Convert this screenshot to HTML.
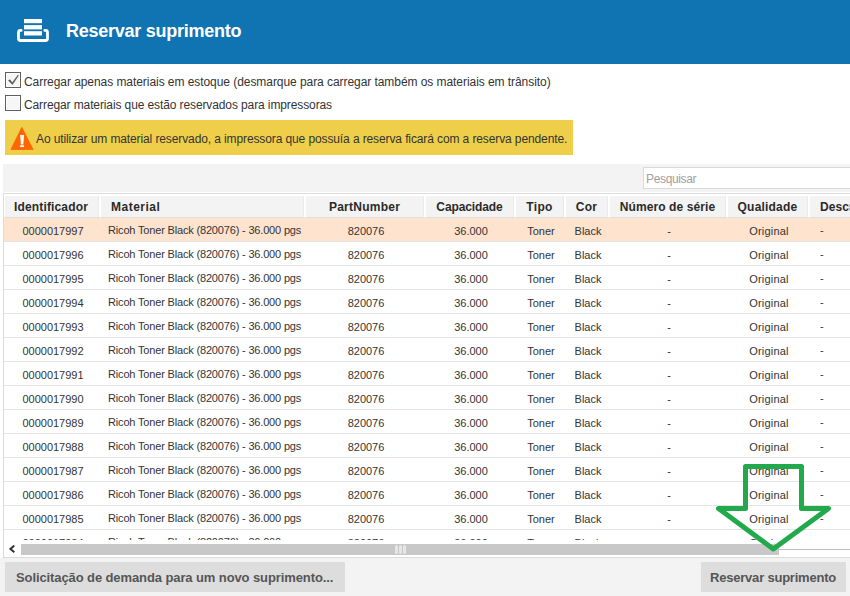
<!DOCTYPE html>
<html><head><meta charset="utf-8">
<style>
*{box-sizing:border-box;margin:0;padding:0}
html,body{width:850px;height:596px;overflow:hidden;background:#fff;font-family:"Liberation Sans",sans-serif;position:relative}
.abs{position:absolute}
.hdr{left:0;top:0;width:850px;height:64px;background:#0f74b1}
.title{left:66px;top:20px;font-size:18px;font-weight:bold;color:#fff;letter-spacing:-0.25px;white-space:nowrap;line-height:22px}
.cb{width:16px;height:16px;border:1px solid #5f5f5f;background:#fff}
.cb i{position:absolute;left:1px;top:1px;right:1px;bottom:1px;background:#f6f6f6}
.lbl{font-size:12px;color:#333;white-space:nowrap;line-height:14px}
.banner{left:5px;top:120px;width:568px;height:35px;background:#efcf49}
.btext{left:36px;top:132px;font-size:12px;color:#333;white-space:nowrap;letter-spacing:-0.11px;line-height:14px}
.panel{left:3px;top:164px;width:847px;height:28px;background:#f3f3f3}
.search{left:643px;top:167px;width:220px;height:22px;background:#fff;border:1px solid #d9d9d9}
.ph{left:646px;top:172px;font-size:12px;color:#a0a0a0;white-space:nowrap;line-height:14px;letter-spacing:-0.35px}
.grid{left:3px;top:193px;width:860px;height:365px;border:1px solid #dcdcdc;border-right:none;background:#fff;overflow:hidden}
.th{position:absolute;top:0px;height:24px;background:#f3f3f3;border-top:2px solid #fff;border-left:1px solid #fff;border-bottom:1px solid #dedede;box-shadow:inset -1px 0 #fff,inset -2px 0 #eaeaea;font-size:12px;font-weight:bold;color:#2a2a2a;line-height:22px;letter-spacing:0.1px;white-space:nowrap;text-align:center}
.row{position:absolute;left:0;width:860px;height:24px;border-bottom:1px solid #e4e4e4}
.row.sel{background:#fee3cf}
.td{position:absolute;top:0;height:23px;font-size:11px;color:#333;line-height:26px;white-space:nowrap;text-align:center;letter-spacing:0px}
.btn{top:562px;height:30px;background:#dddddd;font-size:13px;font-weight:bold;color:#555;white-space:nowrap;line-height:32px}
</style></head><body>
<div class="abs hdr"></div>
<svg class="abs" style="left:0;top:0" width="64" height="64" viewBox="0 0 64 64">
  <rect x="24" y="19" width="18" height="4.2" fill="#fff"/>
  <rect x="24" y="25.1" width="18" height="4.3" fill="#fff"/>
  <rect x="24" y="31.2" width="18" height="4.3" fill="#fff"/>
  <path d="M21.2 30.4 H20.5 Q18.5 30.4 18.5 32.4 V38.5 Q18.5 40.5 20.5 40.5 H45.5 Q47.5 40.5 47.5 38.5 V32.4 Q47.5 30.4 45.5 30.4 H44.8" fill="none" stroke="#fff" stroke-width="2.8" stroke-linecap="round"/>
</svg>
<div class="abs title">Reservar suprimento</div>

<div class="abs cb" style="left:5px;top:72px"><i></i></div>
<svg class="abs" style="left:5px;top:72px" width="16" height="16" viewBox="0 0 16 16"><path d="M3.2 8.6 L5.0 7.6 L7.3 10.4 L12.9 2.9 L13.7 3.5 L7.5 12.7 Z" fill="#5a5a5a" stroke="#5a5a5a" stroke-width="0.2" stroke-linejoin="round"/></svg>
<div class="abs lbl" style="left:24px;top:75px;letter-spacing:-0.06px">Carregar apenas materiais em estoque (desmarque para carregar também os materiais em trânsito)</div>
<div class="abs cb" style="left:5px;top:95px"><i></i></div>
<div class="abs lbl" style="left:24px;top:98px;letter-spacing:-0.11px">Carregar materiais que estão reservados para impressoras</div>

<div class="abs banner"></div>
<svg class="abs" style="left:0;top:120px" width="40" height="35" viewBox="0 0 40 35">
  <path d="M21.8 7.3 L33.1 29.5 L10.9 29.5 Z" fill="#ff6600" stroke="#ff6600" stroke-width="0.8" stroke-linejoin="round"/>
  <path d="M20.1 15 H24.1 L23.3 24.6 H20.9 Z" fill="#fff"/>
  <rect x="20.2" y="25.2" width="3.8" height="1.9" fill="#fff"/>
</svg>
<div class="abs btext">Ao utilizar um material reservado, a impressora que possuía a reserva ficará com a reserva pendente.</div>

<div class="abs panel"></div>
<div class="abs search"></div>
<div class="abs ph">Pesquisar</div>

<div class="abs grid" id="grid">
<div class="th" style="left:0px;width:96px;letter-spacing:0.15px;text-align:left;padding-left:9px">Identificador</div>
<div class="th" style="left:96px;width:205px;letter-spacing:0.5px;text-align:left;padding-left:10px">Material</div>
<div class="th" style="left:301px;width:120px;letter-spacing:0.25px;padding-right:2px">PartNumber</div>
<div class="th" style="left:421px;width:90px;letter-spacing:-0.1px;padding-right:2px">Capacidade</div>
<div class="th" style="left:511px;width:50px;letter-spacing:0.4px;padding-right:2px">Tipo</div>
<div class="th" style="left:561px;width:44px;letter-spacing:0.3px;padding-right:2px">Cor</div>
<div class="th" style="left:605px;width:118px;letter-spacing:0.1px;padding-right:2px">Número de série</div>
<div class="th" style="left:723px;width:82px;letter-spacing:0.2px;padding-right:2px">Qualidade</div>
<div class="th" style="left:805px;width:91px;letter-spacing:0.1px;text-align:left;padding-left:10px">Descrição</div>
<div style="position:absolute;left:0;top:24px;width:860px;height:322px;overflow:hidden">
<div class="row sel" style="top:0px"><div class="td" style="left:0px;width:96px;letter-spacing:0px;padding-left:2px">0000017997</div><div class="td" style="left:96px;width:205px;letter-spacing:-0.17px;text-align:left;padding-left:8px;line-height:24px">Ricoh Toner Black (820076) - 36.000 pgs</div><div class="td" style="left:301px;width:120px;letter-spacing:0px;padding-left:2px">820076</div><div class="td" style="left:421px;width:90px;letter-spacing:0px;padding-left:2px">36.000</div><div class="td" style="left:511px;width:50px;letter-spacing:0px;padding-left:2px">Toner</div><div class="td" style="left:561px;width:44px;letter-spacing:0px;padding-left:2px">Black</div><div class="td" style="left:605px;width:118px;letter-spacing:0px;padding-left:2px">-</div><div class="td" style="left:723px;width:82px;letter-spacing:0.2px;padding-left:2px">Original</div><div class="td" style="left:805px;width:91px;letter-spacing:0px;text-align:left;padding-left:11px;line-height:24px">-</div></div>
<div class="row" style="top:24px"><div class="td" style="left:0px;width:96px;letter-spacing:0px;padding-left:2px">0000017996</div><div class="td" style="left:96px;width:205px;letter-spacing:-0.17px;text-align:left;padding-left:8px;line-height:24px">Ricoh Toner Black (820076) - 36.000 pgs</div><div class="td" style="left:301px;width:120px;letter-spacing:0px;padding-left:2px">820076</div><div class="td" style="left:421px;width:90px;letter-spacing:0px;padding-left:2px">36.000</div><div class="td" style="left:511px;width:50px;letter-spacing:0px;padding-left:2px">Toner</div><div class="td" style="left:561px;width:44px;letter-spacing:0px;padding-left:2px">Black</div><div class="td" style="left:605px;width:118px;letter-spacing:0px;padding-left:2px">-</div><div class="td" style="left:723px;width:82px;letter-spacing:0.2px;padding-left:2px">Original</div><div class="td" style="left:805px;width:91px;letter-spacing:0px;text-align:left;padding-left:11px;line-height:24px">-</div></div>
<div class="row" style="top:48px"><div class="td" style="left:0px;width:96px;letter-spacing:0px;padding-left:2px">0000017995</div><div class="td" style="left:96px;width:205px;letter-spacing:-0.17px;text-align:left;padding-left:8px;line-height:24px">Ricoh Toner Black (820076) - 36.000 pgs</div><div class="td" style="left:301px;width:120px;letter-spacing:0px;padding-left:2px">820076</div><div class="td" style="left:421px;width:90px;letter-spacing:0px;padding-left:2px">36.000</div><div class="td" style="left:511px;width:50px;letter-spacing:0px;padding-left:2px">Toner</div><div class="td" style="left:561px;width:44px;letter-spacing:0px;padding-left:2px">Black</div><div class="td" style="left:605px;width:118px;letter-spacing:0px;padding-left:2px">-</div><div class="td" style="left:723px;width:82px;letter-spacing:0.2px;padding-left:2px">Original</div><div class="td" style="left:805px;width:91px;letter-spacing:0px;text-align:left;padding-left:11px;line-height:24px">-</div></div>
<div class="row" style="top:72px"><div class="td" style="left:0px;width:96px;letter-spacing:0px;padding-left:2px">0000017994</div><div class="td" style="left:96px;width:205px;letter-spacing:-0.17px;text-align:left;padding-left:8px;line-height:24px">Ricoh Toner Black (820076) - 36.000 pgs</div><div class="td" style="left:301px;width:120px;letter-spacing:0px;padding-left:2px">820076</div><div class="td" style="left:421px;width:90px;letter-spacing:0px;padding-left:2px">36.000</div><div class="td" style="left:511px;width:50px;letter-spacing:0px;padding-left:2px">Toner</div><div class="td" style="left:561px;width:44px;letter-spacing:0px;padding-left:2px">Black</div><div class="td" style="left:605px;width:118px;letter-spacing:0px;padding-left:2px">-</div><div class="td" style="left:723px;width:82px;letter-spacing:0.2px;padding-left:2px">Original</div><div class="td" style="left:805px;width:91px;letter-spacing:0px;text-align:left;padding-left:11px;line-height:24px">-</div></div>
<div class="row" style="top:96px"><div class="td" style="left:0px;width:96px;letter-spacing:0px;padding-left:2px">0000017993</div><div class="td" style="left:96px;width:205px;letter-spacing:-0.17px;text-align:left;padding-left:8px;line-height:24px">Ricoh Toner Black (820076) - 36.000 pgs</div><div class="td" style="left:301px;width:120px;letter-spacing:0px;padding-left:2px">820076</div><div class="td" style="left:421px;width:90px;letter-spacing:0px;padding-left:2px">36.000</div><div class="td" style="left:511px;width:50px;letter-spacing:0px;padding-left:2px">Toner</div><div class="td" style="left:561px;width:44px;letter-spacing:0px;padding-left:2px">Black</div><div class="td" style="left:605px;width:118px;letter-spacing:0px;padding-left:2px">-</div><div class="td" style="left:723px;width:82px;letter-spacing:0.2px;padding-left:2px">Original</div><div class="td" style="left:805px;width:91px;letter-spacing:0px;text-align:left;padding-left:11px;line-height:24px">-</div></div>
<div class="row" style="top:120px"><div class="td" style="left:0px;width:96px;letter-spacing:0px;padding-left:2px">0000017992</div><div class="td" style="left:96px;width:205px;letter-spacing:-0.17px;text-align:left;padding-left:8px;line-height:24px">Ricoh Toner Black (820076) - 36.000 pgs</div><div class="td" style="left:301px;width:120px;letter-spacing:0px;padding-left:2px">820076</div><div class="td" style="left:421px;width:90px;letter-spacing:0px;padding-left:2px">36.000</div><div class="td" style="left:511px;width:50px;letter-spacing:0px;padding-left:2px">Toner</div><div class="td" style="left:561px;width:44px;letter-spacing:0px;padding-left:2px">Black</div><div class="td" style="left:605px;width:118px;letter-spacing:0px;padding-left:2px">-</div><div class="td" style="left:723px;width:82px;letter-spacing:0.2px;padding-left:2px">Original</div><div class="td" style="left:805px;width:91px;letter-spacing:0px;text-align:left;padding-left:11px;line-height:24px">-</div></div>
<div class="row" style="top:144px"><div class="td" style="left:0px;width:96px;letter-spacing:0px;padding-left:2px">0000017991</div><div class="td" style="left:96px;width:205px;letter-spacing:-0.17px;text-align:left;padding-left:8px;line-height:24px">Ricoh Toner Black (820076) - 36.000 pgs</div><div class="td" style="left:301px;width:120px;letter-spacing:0px;padding-left:2px">820076</div><div class="td" style="left:421px;width:90px;letter-spacing:0px;padding-left:2px">36.000</div><div class="td" style="left:511px;width:50px;letter-spacing:0px;padding-left:2px">Toner</div><div class="td" style="left:561px;width:44px;letter-spacing:0px;padding-left:2px">Black</div><div class="td" style="left:605px;width:118px;letter-spacing:0px;padding-left:2px">-</div><div class="td" style="left:723px;width:82px;letter-spacing:0.2px;padding-left:2px">Original</div><div class="td" style="left:805px;width:91px;letter-spacing:0px;text-align:left;padding-left:11px;line-height:24px">-</div></div>
<div class="row" style="top:168px"><div class="td" style="left:0px;width:96px;letter-spacing:0px;padding-left:2px">0000017990</div><div class="td" style="left:96px;width:205px;letter-spacing:-0.17px;text-align:left;padding-left:8px;line-height:24px">Ricoh Toner Black (820076) - 36.000 pgs</div><div class="td" style="left:301px;width:120px;letter-spacing:0px;padding-left:2px">820076</div><div class="td" style="left:421px;width:90px;letter-spacing:0px;padding-left:2px">36.000</div><div class="td" style="left:511px;width:50px;letter-spacing:0px;padding-left:2px">Toner</div><div class="td" style="left:561px;width:44px;letter-spacing:0px;padding-left:2px">Black</div><div class="td" style="left:605px;width:118px;letter-spacing:0px;padding-left:2px">-</div><div class="td" style="left:723px;width:82px;letter-spacing:0.2px;padding-left:2px">Original</div><div class="td" style="left:805px;width:91px;letter-spacing:0px;text-align:left;padding-left:11px;line-height:24px">-</div></div>
<div class="row" style="top:192px"><div class="td" style="left:0px;width:96px;letter-spacing:0px;padding-left:2px">0000017989</div><div class="td" style="left:96px;width:205px;letter-spacing:-0.17px;text-align:left;padding-left:8px;line-height:24px">Ricoh Toner Black (820076) - 36.000 pgs</div><div class="td" style="left:301px;width:120px;letter-spacing:0px;padding-left:2px">820076</div><div class="td" style="left:421px;width:90px;letter-spacing:0px;padding-left:2px">36.000</div><div class="td" style="left:511px;width:50px;letter-spacing:0px;padding-left:2px">Toner</div><div class="td" style="left:561px;width:44px;letter-spacing:0px;padding-left:2px">Black</div><div class="td" style="left:605px;width:118px;letter-spacing:0px;padding-left:2px">-</div><div class="td" style="left:723px;width:82px;letter-spacing:0.2px;padding-left:2px">Original</div><div class="td" style="left:805px;width:91px;letter-spacing:0px;text-align:left;padding-left:11px;line-height:24px">-</div></div>
<div class="row" style="top:216px"><div class="td" style="left:0px;width:96px;letter-spacing:0px;padding-left:2px">0000017988</div><div class="td" style="left:96px;width:205px;letter-spacing:-0.17px;text-align:left;padding-left:8px;line-height:24px">Ricoh Toner Black (820076) - 36.000 pgs</div><div class="td" style="left:301px;width:120px;letter-spacing:0px;padding-left:2px">820076</div><div class="td" style="left:421px;width:90px;letter-spacing:0px;padding-left:2px">36.000</div><div class="td" style="left:511px;width:50px;letter-spacing:0px;padding-left:2px">Toner</div><div class="td" style="left:561px;width:44px;letter-spacing:0px;padding-left:2px">Black</div><div class="td" style="left:605px;width:118px;letter-spacing:0px;padding-left:2px">-</div><div class="td" style="left:723px;width:82px;letter-spacing:0.2px;padding-left:2px">Original</div><div class="td" style="left:805px;width:91px;letter-spacing:0px;text-align:left;padding-left:11px;line-height:24px">-</div></div>
<div class="row" style="top:240px"><div class="td" style="left:0px;width:96px;letter-spacing:0px;padding-left:2px">0000017987</div><div class="td" style="left:96px;width:205px;letter-spacing:-0.17px;text-align:left;padding-left:8px;line-height:24px">Ricoh Toner Black (820076) - 36.000 pgs</div><div class="td" style="left:301px;width:120px;letter-spacing:0px;padding-left:2px">820076</div><div class="td" style="left:421px;width:90px;letter-spacing:0px;padding-left:2px">36.000</div><div class="td" style="left:511px;width:50px;letter-spacing:0px;padding-left:2px">Toner</div><div class="td" style="left:561px;width:44px;letter-spacing:0px;padding-left:2px">Black</div><div class="td" style="left:605px;width:118px;letter-spacing:0px;padding-left:2px">-</div><div class="td" style="left:723px;width:82px;letter-spacing:0.2px;padding-left:2px">Original</div><div class="td" style="left:805px;width:91px;letter-spacing:0px;text-align:left;padding-left:11px;line-height:24px">-</div></div>
<div class="row" style="top:264px"><div class="td" style="left:0px;width:96px;letter-spacing:0px;padding-left:2px">0000017986</div><div class="td" style="left:96px;width:205px;letter-spacing:-0.17px;text-align:left;padding-left:8px;line-height:24px">Ricoh Toner Black (820076) - 36.000 pgs</div><div class="td" style="left:301px;width:120px;letter-spacing:0px;padding-left:2px">820076</div><div class="td" style="left:421px;width:90px;letter-spacing:0px;padding-left:2px">36.000</div><div class="td" style="left:511px;width:50px;letter-spacing:0px;padding-left:2px">Toner</div><div class="td" style="left:561px;width:44px;letter-spacing:0px;padding-left:2px">Black</div><div class="td" style="left:605px;width:118px;letter-spacing:0px;padding-left:2px">-</div><div class="td" style="left:723px;width:82px;letter-spacing:0.2px;padding-left:2px">Original</div><div class="td" style="left:805px;width:91px;letter-spacing:0px;text-align:left;padding-left:11px;line-height:24px">-</div></div>
<div class="row" style="top:288px"><div class="td" style="left:0px;width:96px;letter-spacing:0px;padding-left:2px">0000017985</div><div class="td" style="left:96px;width:205px;letter-spacing:-0.17px;text-align:left;padding-left:8px;line-height:24px">Ricoh Toner Black (820076) - 36.000 pgs</div><div class="td" style="left:301px;width:120px;letter-spacing:0px;padding-left:2px">820076</div><div class="td" style="left:421px;width:90px;letter-spacing:0px;padding-left:2px">36.000</div><div class="td" style="left:511px;width:50px;letter-spacing:0px;padding-left:2px">Toner</div><div class="td" style="left:561px;width:44px;letter-spacing:0px;padding-left:2px">Black</div><div class="td" style="left:605px;width:118px;letter-spacing:0px;padding-left:2px">-</div><div class="td" style="left:723px;width:82px;letter-spacing:0.2px;padding-left:2px">Original</div><div class="td" style="left:805px;width:91px;letter-spacing:0px;text-align:left;padding-left:11px;line-height:24px">-</div></div>
<div class="row" style="top:312px"><div class="td" style="left:0px;width:96px;letter-spacing:0px;padding-left:2px">0000017984</div><div class="td" style="left:96px;width:205px;letter-spacing:-0.17px;text-align:left;padding-left:8px;line-height:24px">Ricoh Toner Black (820076) - 36.000 pgs</div><div class="td" style="left:301px;width:120px;letter-spacing:0px;padding-left:2px">820076</div><div class="td" style="left:421px;width:90px;letter-spacing:0px;padding-left:2px">36.000</div><div class="td" style="left:511px;width:50px;letter-spacing:0px;padding-left:2px">Toner</div><div class="td" style="left:561px;width:44px;letter-spacing:0px;padding-left:2px">Black</div><div class="td" style="left:605px;width:118px;letter-spacing:0px;padding-left:2px">-</div><div class="td" style="left:723px;width:82px;letter-spacing:0.2px;padding-left:2px">Original</div><div class="td" style="left:805px;width:91px;letter-spacing:0px;text-align:left;padding-left:11px;line-height:24px">-</div></div>
</div>
<div style="position:absolute;left:0;top:347px;width:860px;height:16px;background:#fff"></div>
<svg style="position:absolute;left:5px;top:351px" width="7" height="9" viewBox="0 0 7 9"><path d="M5.3 0.6 L1.4 3.9 L5.3 7.2" fill="none" stroke="#333" stroke-width="2"/></svg>
<div style="position:absolute;left:17px;top:350px;width:758px;height:11px;background:#c8c8c8"></div>
<div style="position:absolute;left:775px;top:355px;width:100px;height:1px;background:#bdbdbd"></div>
<div style="position:absolute;left:391px;top:351px;width:3px;height:9px;border-radius:1.5px;background:#e6e6e6"></div>
<div style="position:absolute;left:395px;top:351px;width:3px;height:9px;border-radius:1.5px;background:#e6e6e6"></div>
<div style="position:absolute;left:399px;top:351px;width:3px;height:9px;border-radius:1.5px;background:#e6e6e6"></div>
</div>

<div class="abs" style="left:0;top:558px;width:850px;height:38px;background:#f3f3f3"></div>
<div class="abs btn" style="left:5px;width:340px;padding-left:11px;letter-spacing:-0.1px">Solicitação de demanda para um novo suprimento...</div>
<div class="abs btn" style="left:701px;width:145px;padding-left:9px;letter-spacing:-0.21px">Reservar suprimento</div>

<svg class="abs" style="left:0;top:0" width="850" height="596" viewBox="0 0 850 596">
  <path d="M745.5 466.5 H801.5 V508.5 H828.5 L773.3 549 L718.5 508.5 H745.5 Z" fill="none" stroke="#22a94b" stroke-width="5" stroke-linejoin="round"/>
</svg>
</body></html>
